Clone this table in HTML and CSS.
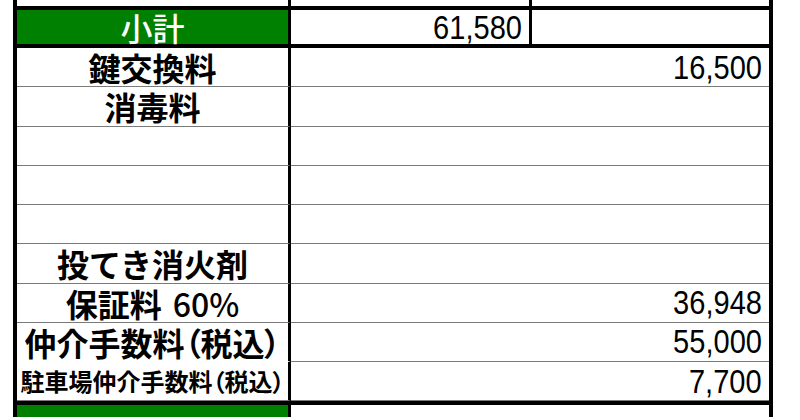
FILE: index.html
```html
<!DOCTYPE html>
<html lang="ja">
<head>
<meta charset="utf-8">
<title>費用明細</title>
<link rel="stylesheet" href="styles.css">
</head>
<body>
<div class="sheet">
  <div class="row split top">
    <div class="cell label"></div><div class="cell mid"></div><div class="cell end"></div>
  </div>
  <div class="row split subtotal thick">
    <div class="cell label green light">小計</div><div class="cell mid num"><span class="digits">61,580</span></div><div class="cell end"></div>
  </div>
  <div class="row item thick">
    <div class="cell label">鍵交換料</div><div class="cell value num"><span class="digits">16,500</span></div>
  </div>
  <div class="row item">
    <div class="cell label">消毒料</div><div class="cell value num"></div>
  </div>
  <div class="row item">
    <div class="cell label"></div><div class="cell value num"></div>
  </div>
  <div class="row item">
    <div class="cell label"></div><div class="cell value num"></div>
  </div>
  <div class="row item">
    <div class="cell label"></div><div class="cell value num"></div>
  </div>
  <div class="row item">
    <div class="cell label">投てき消火剤</div><div class="cell value num"></div>
  </div>
  <div class="row item">
    <div class="cell label">保証料<span class="pct"> 60%</span></div><div class="cell value num"><span class="digits">36,948</span></div>
  </div>
  <div class="row item">
    <div class="cell label paren noline">仲介手数料（税込）</div><div class="cell value num"><span class="digits">55,000</span></div>
  </div>
  <div class="row item">
    <div class="cell label paren small">駐車場仲介手数料（税込）</div><div class="cell value num"><span class="digits">7,700</span></div>
  </div>
  <div class="row total thick">
    <div class="cell label green light">合計</div><div class="cell value"></div>
  </div>
</div>
</body>
</html>
```
FILE: styles.css
```css
html, body {
  margin: 0;
  padding: 0;
  background: #ffffff;
  overflow: hidden;
}

.sheet {
  margin-left: 13px;
  width: 760px;
  box-sizing: border-box;
  border-left: 4px solid #000;
  border-right: 4px solid #000;
}

.row {
  display: grid;
  box-sizing: border-box;
}

.split {
  grid-template-columns: 274px 241px 1fr;
}

.item,
.total {
  grid-template-columns: 274px 1fr;
}

.thick {
  border-top: 4px solid #000;
}

.top {
  height: 6px;
}

.subtotal {
  height: 38px;
}

.cell {
  box-sizing: border-box;
  display: flex;
  align-items: center;
  min-width: 0;
  white-space: pre;
}

.label {
  border-right: 3px solid #000;
  justify-content: center;
  font-family: "Noto Sans CJK JP", "Noto Sans", sans-serif;
  font-weight: 700;
  font-size: 32px;
  line-height: 1;
  color: #000;
}

.pct {
  font-weight: 500;
  margin-left: 4px;
}

.mid {
  border-right: 3px solid #000;
}

.green {
  background: #008000;
  color: #ffffff;
}

.light {
  font-weight: 500;
}

.item .cell {
  height: 39.25px;
  border-bottom: 1px solid #7a7a7a;
}

.item .cell.noline {
  border-bottom-color: #ffffff;
}

.paren {
  font-feature-settings: "palt";
}

.small {
  font-size: 24px;
}

.num {
  justify-content: flex-end;
  padding-right: 7px;
  font-family: "Liberation Sans", Arial, sans-serif;
  font-size: 33px;
  line-height: 1;
  color: #000;
}

.digits {
  display: inline-block;
  transform: scaleX(0.88);
  transform-origin: right center;
}

.total {
  height: 16px;
  overflow: hidden;
}

.total .label {
  align-items: flex-start;
  padding-top: 14px;
}
```
